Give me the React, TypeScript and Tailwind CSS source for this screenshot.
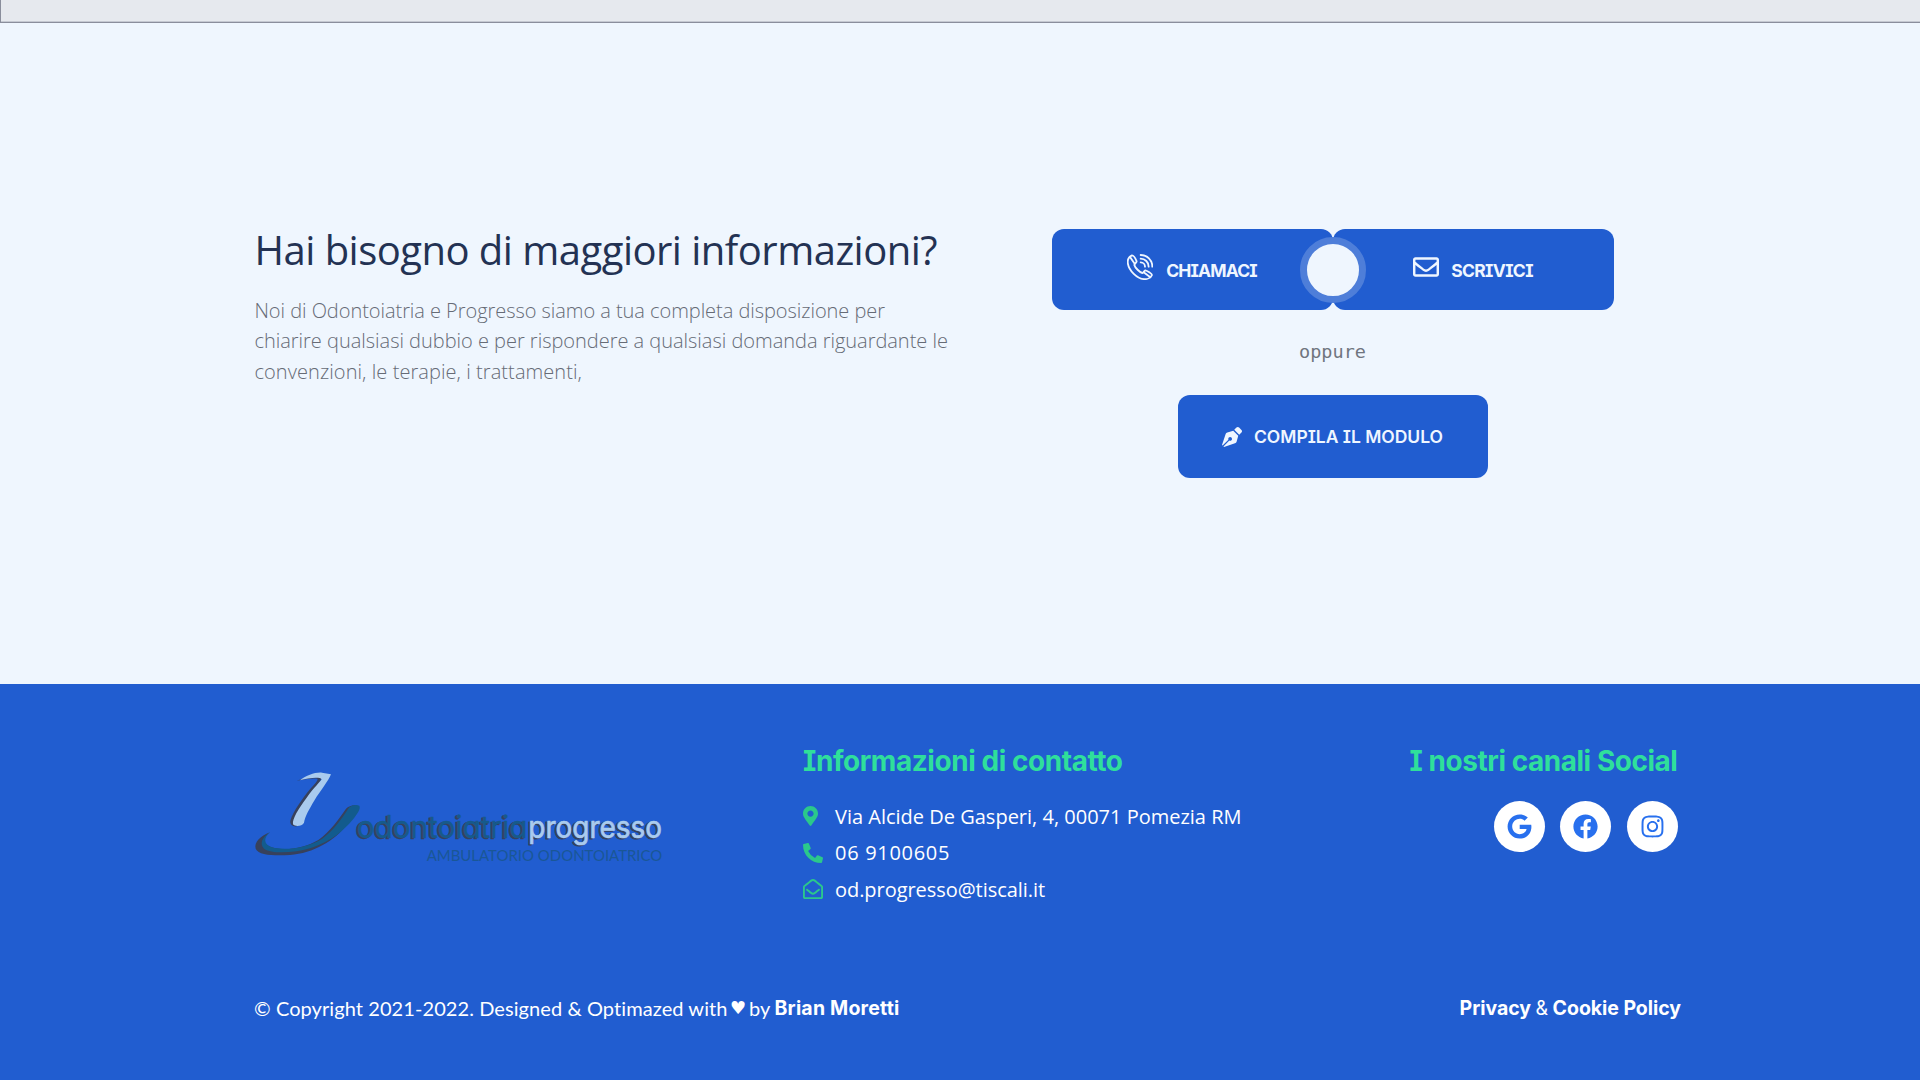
import type { ReactNode } from "react";
import {
  FaFacebook,
  FaGoogle,
  FaInstagram,
  FaMapMarkerAlt,
  FaPenNib,
  FaPhoneAlt,
  FaRegEnvelope,
  FaRegEnvelopeOpen,
} from "react-icons/fa";

function PhoneCallIcon() {
  return (
    <svg
      viewBox="0 0 78 78"
      className="mb-0.5 size-[26px] shrink-0"
      fill="none"
      stroke="currentColor"
      strokeWidth="5.5"
      strokeLinecap="round"
      strokeLinejoin="round"
    >
      <path d="M15 4C6 8 1 17 2.500 28C6 50 30 74 52 75.500C62 76 72 70 75 63C75 59 60 50 55 49C51 50 50 56 46 57C38 55 24 41 22 33C22 29 29 27 29 22C27 17 20 4 15 4Z" />
      <path d="M9 9L23 29M50 55L70 70" />
      <path d="M41 3A35 35 0 0 1 76 38M41 14A24 24 0 0 1 65 38M41 25A13 13 0 0 1 54 38" />
    </svg>
  );
}

function Logo() {
  return (
    <svg
      viewBox="42 60 1230 282"
      className="h-[94px] w-[410px] overflow-visible"
      role="img"
      aria-label="Odontoiatria Progresso"
    >
      <path
        d="M90 247C60 258 42 278 47 296C56 316 100 317 150 315C220 310 285 272 322 222C344 195 358 178 352 167C342 163 326 168 318 176C298 205 270 245 235 270C190 296 130 305 90 290C66 280 66 264 90 247Z"
        fill="#37415c"
      />
      <path
        d="M90 247C66 262 58 282 72 296C100 314 165 308 215 293C275 273 312 240 338 209C352 192 363 176 358 167C348 163 333 166 326 174C306 206 282 240 247 266C205 293 135 303 96 292C70 283 70 264 90 247Z"
        fill="#125b8d"
      />
      <path
        d="M170 92C195 84 222 76 240 79C250 84 235 104 222 124C196 162 182 190 177 226C166 234 148 226 151 212C160 182 190 143 208 120C222 104 236 90 232 86C214 84 190 88 170 92Z"
        fill="#37415c"
      />
      <path
        d="M180 91C200 76 225 66 246 68L273 73C266 92 240 124 224 150C206 180 195 200 192 218C186 229 166 231 159 223C156 206 176 176 200 143C222 113 240 96 245 88C240 80 205 84 180 91Z"
        fill="#a9cbee"
      />
      <g
        fontFamily="Inter, sans-serif"
        fontSize="94"
        className="[font-feature-settings:'cv11']"
        strokeLinejoin="round"
      >
        <text x="345" y="266" textLength="512" lengthAdjust="spacingAndGlyphs" fill="#37415c" stroke="#37415c" strokeWidth="2">
          odontoiatria
        </text>
        <text x="350" y="264" textLength="512" lengthAdjust="spacingAndGlyphs" fill="#165a8b" stroke="#165a8b" strokeWidth="1">
          odontoiatria
        </text>
        <text x="860" y="266" textLength="401" lengthAdjust="spacingAndGlyphs" fill="#37415c" stroke="#37415c" strokeWidth="3">
          progresso
        </text>
        <text x="865" y="263" textLength="401" lengthAdjust="spacingAndGlyphs" fill="#a9cbee" stroke="#a9cbee" strokeWidth="2">
          progresso
        </text>
      </g>
      <text
        x="560"
        y="333"
        textLength="707"
        lengthAdjust="spacingAndGlyphs"
        fontFamily="Lato, sans-serif"
        fontSize="47"
        fill="#1a5796"
      >
        AMBULATORIO ODONTOIATRICO
      </text>
    </svg>
  );
}

function ContactRow({ icon, children }: { icon: ReactNode; children: ReactNode }) {
  return (
    <li className="flex h-[36.8px] items-center">
      <span className="w-8 shrink-0 text-[#2bc88b]">{icon}</span>
      <span className="pt-[1.5px]">{children}</span>
    </li>
  );
}

function SocialLink({ children }: { children: ReactNode }) {
  return (
    <a href="#" className="flex size-[51px] items-center justify-center rounded-full bg-white text-[25px] text-[#2870ee]">
      {children}
    </a>
  );
}

export default function App() {
  return (
    <div className="flex h-[1080px] w-[1920px] flex-col overflow-hidden bg-[#eff6fe] font-['Open_Sans',sans-serif]">
      <div className="h-[23px] shrink-0 border-b border-l border-[#8a8e9c] bg-[#e6e9ee]">
        <div className="h-full border-b border-[#c5c9d2]" />
      </div>

      <section className="flex h-[661px] shrink-0 pl-[254.5px]">
        <div className="w-[797px] pt-[202.5px]">
          <h2 className="text-[40px] leading-[48px] tracking-[-0.52px] text-[#233253]">
            Hai bisogno di maggiori informazioni?
          </h2>
          <p className="mt-[22px] text-[20px] leading-[30.6px] font-light tracking-[-0.02px] text-[#666b76]">
            <span className="tracking-[-0.05px]">Noi di Odontoiatria e Progresso siamo a tua completa disposizione per</span>
            <br />
            chiarire qualsiasi dubbio e per rispondere a qualsiasi domanda riguardante le
            <br />
            <span className="tracking-[0.07px]">convenzioni, le terapie, i trattamenti,</span>
          </p>
        </div>

        <div className="flex w-[562px] flex-col items-center pt-[206px]">
          <div className="relative flex w-full font-['Inter',sans-serif] text-[17.5px] font-bold text-[#eff6ff] [font-feature-settings:'cv08']">
            <a href="#" className="flex h-[81px] flex-1 items-center justify-center gap-[13px] rounded-xl bg-[#215dd0] pb-1">
              <PhoneCallIcon />
              <span className="pt-2 tracking-[-0.85px]">CHIAMACI</span>
            </a>
            <a href="#" className="flex h-[81px] flex-1 items-center justify-center gap-3 rounded-xl bg-[#215dd0] pb-1">
              <FaRegEnvelope className="mb-0.5 size-[26px]" />
              <span className="pt-[7px] tracking-[-0.65px]">SCRIVICI</span>
            </a>
            <span className="absolute top-[7.5px] left-[248px] size-[66px] rounded-full border-[7.5px] border-[#4e7ed9] bg-[#eff6fe]" />
          </div>
          <p className="mt-[28px] font-['DejaVu_Sans_Mono',monospace] text-[18.5px] leading-[28px] text-[#70757f]">
            oppure
          </p>
          <a
            href="#"
            className="mt-[29px] flex h-[83px] w-[310px] items-center justify-center gap-3 rounded-xl bg-[#215dd0] font-['Inter',sans-serif] text-[17.5px] font-semibold text-[#eff6ff] [font-feature-settings:'cv08']"
          >
            <FaPenNib className="size-5" />
            <span className="pt-px tracking-[-0.02px]">COMPILA IL MODULO</span>
          </a>
        </div>
      </section>

      <footer className="flex flex-1 flex-col bg-[#215dd0] pr-[239px] pl-[254px] text-white">
        <div className="flex h-[306px]">
          <div className="w-[549px] pt-[86px]">
            <Logo />
          </div>
          <div className="pt-[59.5px]">
            <h3 className="font-['Inter',sans-serif] text-[28px] leading-[34px] font-bold tracking-[-0.45px] text-[#2fdf9b] [font-feature-settings:'cv08']">
              Informazioni di contatto
            </h3>
            <ul className="mt-5 text-[20px]">
              <ContactRow icon={<FaMapMarkerAlt className="h-5 w-[15px]" />}>
                Via Alcide De Gasperi, 4, 00071 Pomezia RM
              </ContactRow>
              <ContactRow icon={<FaPhoneAlt className="size-5" />}>
                <span className="tracking-[0.7px]">06 9100605</span>
              </ContactRow>
              <ContactRow icon={<FaRegEnvelopeOpen className="size-5" />}>
                <span className="tracking-[-0.05px]">od.progresso@tiscali.it</span>
              </ContactRow>
            </ul>
          </div>
          <div className="ml-auto flex flex-col items-end pt-[59.5px] pr-[3.5px]">
            <h3 className="font-['Inter',sans-serif] text-[28px] leading-[34px] font-bold tracking-[-0.47px] text-[#2fdf9b] [font-feature-settings:'cv08']">
              I nostri canali Social
            </h3>
            <div className="mt-[23.5px] flex gap-[15.3px]">
              <SocialLink>
                <FaGoogle />
              </SocialLink>
              <SocialLink>
                <FaFacebook />
              </SocialLink>
              <SocialLink>
                <FaInstagram />
              </SocialLink>
            </div>
          </div>
        </div>
        <div className="flex justify-between text-[20px] leading-[36px]">
          <p className="flex font-['Lato',sans-serif]">
            <span className="w-[476px] tracking-[0.08px] whitespace-nowrap [font-variant-ligatures:none]">
              © Copyright 2021-2022. Designed &amp; Optimazed with
            </span>
            <span className="w-[19px] font-['DejaVu_Sans',sans-serif] text-[18px]">♥</span>
            <span className="w-[25.5px]">by</span>
            <a href="#" className="font-['Inter',sans-serif] text-[19.5px] font-bold tracking-[0.2px]">
              Brian Moretti
            </a>
          </p>
          <p className="font-['Inter',sans-serif] text-[19.5px] font-bold tracking-[-0.05px]">
            <a href="#">Privacy</a> <span className="font-normal">&amp;</span> <a href="#">Cookie Policy</a>
          </p>
        </div>
      </footer>
    </div>
  );
}
